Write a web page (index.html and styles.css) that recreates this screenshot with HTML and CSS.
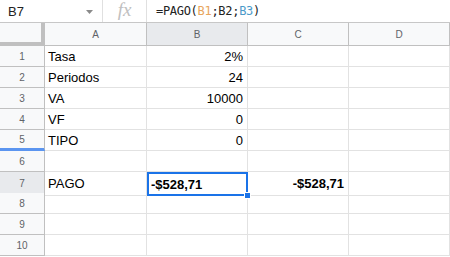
FILE: index.html
```html
<!DOCTYPE html>
<html lang="es">
<head>
    <meta charset="UTF-8">
    <title>Hoja de cálculo - PAGO</title>
    <link rel="stylesheet" href="styles.css">
</head>
<body>

    <!-- Formula bar -->
    <div class="formula-bar">
        <div class="name-box">B7</div>
        <div class="name-arrow">
            <svg width="7" height="4" viewBox="0 0 7 4"><path d="M0 0h7L3.5 4z" fill="#8a8a8a"/></svg>
        </div>
        <div class="fx">fx</div>
        <div class="formula">=PAGO(<span class="ref-1">B1</span>;<span class="ref-2">B2</span>;<span class="ref-3">B3</span>)</div>
    </div>

    <!-- Grid -->
    <div class="sheet">
        <div class="corner"></div>
        <div class="col-head">A</div>
        <div class="col-head selected">B</div>
        <div class="col-head">C</div>
        <div class="col-head">D</div>

        <div class="row-head">1</div>
        <div class="cell">Tasa</div>
        <div class="cell num">2%</div>
        <div class="cell"></div>
        <div class="cell"></div>

        <div class="row-head">2</div>
        <div class="cell">Periodos</div>
        <div class="cell num">24</div>
        <div class="cell"></div>
        <div class="cell"></div>

        <div class="row-head">3</div>
        <div class="cell">VA</div>
        <div class="cell num">10000</div>
        <div class="cell"></div>
        <div class="cell"></div>

        <div class="row-head">4</div>
        <div class="cell">VF</div>
        <div class="cell num">0</div>
        <div class="cell"></div>
        <div class="cell"></div>

        <div class="row-head frozen">5</div>
        <div class="cell">TIPO</div>
        <div class="cell num">0</div>
        <div class="cell"></div>
        <div class="cell"></div>

        <div class="row-head">6</div>
        <div class="cell"></div>
        <div class="cell"></div>
        <div class="cell"></div>
        <div class="cell"></div>

        <div class="row-head selected tall">7</div>
        <div class="cell tall">PAGO</div>
        <div class="cell tall active">-$528,71<span class="handle"></span></div>
        <div class="cell tall num bold">-$528,71</div>
        <div class="cell tall"></div>

        <div class="row-head">8</div>
        <div class="cell"></div>
        <div class="cell"></div>
        <div class="cell"></div>
        <div class="cell"></div>

        <div class="row-head">9</div>
        <div class="cell"></div>
        <div class="cell"></div>
        <div class="cell"></div>
        <div class="cell"></div>

        <div class="row-head">10</div>
        <div class="cell"></div>
        <div class="cell"></div>
        <div class="cell"></div>
        <div class="cell"></div>
    </div>

</body>
</html>
```

FILE: styles.css
```css
/* Reset */
* {
    margin: 0;
    padding: 0;
    box-sizing: border-box;
}

body {
    background: #fff;
    color: #000;
    font-family: 'Liberation Sans', Arial, sans-serif;
    overflow: hidden;
}

/* Formula bar */
.formula-bar {
    display: flex;
    align-items: center;
    height: 23px;
    border-bottom: 1px solid #c7c7c7;
}

.name-box {
    width: 86px;
    padding-left: 8px;
    font-size: 13px;
    color: #222;
}

.name-arrow {
    width: 17px;
    display: flex;
    align-items: center;
    height: 100%;
    padding-top: 2px;
    border-right: 1px solid #e0e0e0;
}

.fx {
    width: 44px;
    height: 100%;
    text-align: center;
    font-family: 'Liberation Serif', serif;
    font-style: italic;
    font-size: 19px;
    line-height: 20px;
    color: #c0c0c0;
    border-right: 1px solid #e0e0e0;
}

.formula {
    padding-left: 9px;
    font-family: 'DejaVu Sans Mono', monospace;
    font-size: 12px;
    letter-spacing: -0.3px;
    color: #222;
}

.ref-1 { color: #e8a55c; }
.ref-2 { color: #222; }
.ref-3 { color: #4b9ac9; }

/* Grid */
.sheet {
    display: grid;
    grid-template-columns: 45px 102px 101px 101px 101px;
    grid-auto-rows: 21px;
    grid-template-rows: 23px;
}

.corner {
    background: #f8f9fa;
    border-right: 4px solid #c0c0c0;
    border-bottom: 4px solid #c0c0c0;
}

.col-head {
    background: #f8f9fa;
    border-right: 1px solid #c0c0c0;
    border-bottom: 1px solid #c0c0c0;
    color: #5f6368;
    font-size: 10px;
    display: flex;
    align-items: center;
    justify-content: center;
}

.col-head.selected {
    background: #e8eaed;
}

.row-head {
    background: #f8f9fa;
    border-right: 1px solid #c0c0c0;
    border-bottom: 1px solid #c0c0c0;
    color: #5f6368;
    font-size: 10px;
    display: flex;
    align-items: center;
    justify-content: center;
}

.row-head.frozen {
    border-bottom: 3px solid #5b95f0;
}

.row-head.selected {
    background: #e8eaed;
}

.tall {
    height: 24px;
}

.cell {
    position: relative;
    border-right: 1px solid #e2e2e2;
    border-bottom: 1px solid #e2e2e2;
    font-size: 13px;
    padding: 0 4px 0 3px;
    display: flex;
    align-items: center;
    white-space: nowrap;
}

.cell.num {
    justify-content: flex-end;
}

.cell.bold {
    font-weight: bold;
}

/* Selected cell */
.cell.active {
    z-index: 2;
    border: 2px solid #1a73e8;
    font-weight: bold;
    padding-left: 2px;
}

.handle {
    position: absolute;
    right: -5px;
    bottom: -5px;
    width: 7px;
    height: 7px;
    background: #1a73e8;
    border: 1px solid #fff;
}
```
